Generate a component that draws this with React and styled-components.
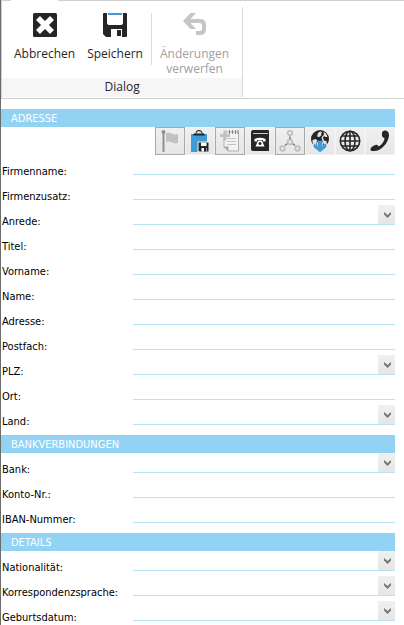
import styled, { createGlobalStyle, css } from 'styled-components';

const GlobalStyle = createGlobalStyle`
  * {
    box-sizing: border-box;
  }

  body {
    margin: 0;
    background: #fff;
    color: #000;
    font-family: "DejaVu Sans Condensed", Tahoma, sans-serif;
    font-size: 11px;
  }

  button, input, select {
    font: inherit;
    color: inherit;
    margin: 0;
  }
`;

const sections = [
  {
    title: 'ADRESSE',
    tools: true,
    fields: [
      { id: 'firmenname', label: 'Firmenname:' },
      { id: 'firmenzusatz', label: 'Firmenzusatz:' },
      { id: 'anrede', label: 'Anrede:', select: true },
      { id: 'titel', label: 'Titel:' },
      { id: 'vorname', label: 'Vorname:' },
      { id: 'name', label: 'Name:' },
      { id: 'adresse', label: 'Adresse:' },
      { id: 'postfach', label: 'Postfach:' },
      { id: 'plz', label: 'PLZ:', select: true },
      { id: 'ort', label: 'Ort:' },
      { id: 'land', label: 'Land:', select: true },
    ],
  },
  {
    title: 'BANKVERBINDUNGEN',
    fields: [
      { id: 'bank', label: 'Bank:', select: true },
      { id: 'konto', label: 'Konto-Nr.:' },
      { id: 'iban', label: 'IBAN-Nummer:' },
    ],
  },
  {
    title: 'DETAILS',
    fields: [
      { id: 'nationalitaet', label: 'Nationalität:', select: true },
      { id: 'sprache', label: 'Korrespondenzsprache:', select: true },
      { id: 'geburtsdatum', label: 'Geburtsdatum:', select: true },
    ],
  },
];

const CancelIcon = () => (
  <svg width="24" height="24" viewBox="0 0 24 24">
    <rect width="24" height="24" rx="1.500" fill="#262626" />
    <path d="M5 5l14 14M19 5L5 19" stroke="#fff" strokeWidth="5.600" />
  </svg>
);

const SaveIcon = () => (
  <svg width="24" height="24" viewBox="0 0 24 24">
    <path d="M1 0h3v10q0 2 2 2h12q2 0 2-2V0h3q1 0 1 1v22q0 1-1 1h-4v-8H8v8H3l-3-3V1q0-1 1-1z" fill="#262626" />
    <path d="M5 0h14v2H5z" fill="#3c9bd8" />
    <path d="M14 17h4v6h-4z" fill="#262626" />
  </svg>
);

const UndoIcon = () => (
  <svg width="24" height="24" viewBox="0 0 24 24">
    <path d="M0 8l7.500-8H13L7.500 6H17q6 0 6 5.500V16q0 6-6 6h-4v-4h3.500q2.500 0 2.500-2.500V12q0-2-2.500-2h-9l5.500 6H7.500z" fill="#c6c6c6" />
  </svg>
);

const FlagIcon = () => (
  <svg width="20" height="24" viewBox="0 0 20 24">
    <circle cx="3.500" cy="3" r="2" fill="#909090" />
    <path d="M2.500 4h2v19h-2z" fill="#909090" />
    <path d="M6 4q3-1 6 .5t6 .5v9q-3 1-6-.5T6 13z" fill="#c2c2c2" />
  </svg>
);

const PasteSaveIcon = () => (
  <svg width="20" height="24" viewBox="0 0 20 24">
    <path d="M1 5h16v8H8v10H1z" fill="#3c9bd8" />
    <path d="M3 6.500q0-2 2.500-2.500Q6 1 9 1t3.500 3Q15 4.500 15 6.500z" fill="#262626" />
    <path d="M6 4.500Q6.500 2 9 2t3 2.500z" fill="#ddd" />
    <path d="M7.500 12.500h12v11h-12z" fill="#eee" />
    <path d="M8.500 13.500h10v9h-9l-1-1z" fill="#262626" />
    <path d="M11 13.500h5.500v3.500H11zM11.500 19h5v3.500h-5z" fill="#fff" />
    <path d="M14 19h2v3.500h-2z" fill="#262626" />
  </svg>
);

const NoteIcon = () => (
  <svg width="20" height="24" viewBox="0 0 20 24">
    <path d="M4 3h14.500v19H8l-4-4z" fill="#f3f3f3" stroke="#b0b0b0" />
    <path d="M4 17.500h4.500V22z" fill="#aaa" />
    <path d="M9.500 1v4M12.500 1v4M15.500 1v4M18 1v4" stroke="#888" />
    <path d="M7 9.500h9M7 12.500h9M7 15.500h9" stroke="#c2c2c2" />
    <path d="M0 6.500h10M5 1.500v10" stroke="#c2c2c2" strokeWidth="3" />
  </svg>
);

const PhoneBookIcon = () => (
  <svg width="20" height="22" viewBox="0 0 20 22">
    <path d="M3 0h15q1 0 1 1v20H3q-2 0-2-2V3q0-3 2-3z" fill="#262626" />
    <path d="M3 3.500h15" stroke="#ccc" />
    <path d="M4.500 11.500V9q5.500-2.500 11 0v2.500H13V10H7v1.500zM8 10.500h4l2.500 6h-9z" fill="#fff" />
    <circle cx="10" cy="13.500" r="1.500" fill="#262626" />
  </svg>
);

const NetworkIcon = () => (
  <svg width="22" height="22" viewBox="0 0 22 22">
    <path d="M11 6.500v2.500M8.500 13.500L6 15.500M13.500 13.500l2.500 2" stroke="#777" strokeWidth="1.500" />
    <g fill="none" stroke="#bdbdbd" strokeWidth="1.700">
      <circle cx="11" cy="3" r="2.300" />
      <circle cx="11" cy="12" r="2.300" />
      <circle cx="3.500" cy="18.500" r="2.300" />
      <circle cx="18.500" cy="18.500" r="2.300" />
    </g>
  </svg>
);

const GlobeDownIcon = () => (
  <svg width="20" height="24" viewBox="0 0 20 24">
    <circle cx="10" cy="10" r="9" fill="#262626" />
    <path d="M2.500 11l3-1 2 1.500-1 2v3l-2-1-2-2zM8 4l2-1.500 2 .5-1 2 .5 1-2 2L7 7.500zM13.500 3L16 4.500 17.500 8l-2 0-1.500-1-1 2 1 2.500 3 1-1 2.500-2 1-1.500-4-1-3 1-2 1.500-1z" fill="#e4e4e4" />
    <path d="M7 13h6v4l4-3v4l-7 5.500L3 18v-4l4 3z" fill="#eee" />
    <path d="M8 12h4v6l4-3v3l-6 5-6-5v-3l4 3z" fill="#3c9bd8" stroke="#3c9bd8" strokeWidth=".8" />
  </svg>
);

const GlobeIcon = () => (
  <svg width="22" height="22" viewBox="0 0 22 22">
    <g fill="none" stroke="#262626" strokeWidth="1.600">
      <circle cx="11" cy="11" r="9.700" />
      <ellipse cx="11" cy="11" rx="5" ry="9.700" />
      <path d="M11 1v20M1 11h20M3 6h16M3 16h16" />
    </g>
  </svg>
);

const PhoneIcon = () => (
  <svg width="20" height="22" viewBox="0 0 20 22">
    <path d="M12 2.500q1-2.500 4-2 3 1 3 5-.5 6-5.500 11T3 21q-3 0-2.500-2 .5-2.500 3.500-3.500 2.500-1 3.500-.5l1 1.500q3-1.500 4.500-4t1.500-4.500q-2.500-.5-2.500-2.500z" fill="#262626" />
  </svg>
);

const Chevron = () => (
  <svg width="7" height="6" viewBox="0 0 7 6">
    <path d="M0 0l3.500 3L7 0v2.500L3.500 6 0 2.500z" fill="#777" />
  </svg>
);

const tools = [
  { name: 'Markieren', Icon: FlagIcon, framed: true },
  { name: 'Einfügen und speichern', Icon: PasteSaveIcon },
  { name: 'Neue Notiz', Icon: NoteIcon, framed: true },
  { name: 'Telefonbuch', Icon: PhoneBookIcon },
  { name: 'Beziehungen', Icon: NetworkIcon, framed: true },
  { name: 'Aus dem Web laden', Icon: GlobeDownIcon },
  { name: 'Webseite', Icon: GlobeIcon },
  { name: 'Anrufen', Icon: PhoneIcon },
];

const Window = styled.main`
  border-left: 1px solid #6b6b6b;
`;

const RibbonTop = styled.div`
  display: grid;
  grid-template-columns: 10px 47px 1fr;
  height: 1px;
`;

const TopLine = styled.span`
  background: ${(props) => (props.$open ? '#fff' : '#d0d0d0')};
`;

const Ribbon = styled.header`
  display: flex;
  padding: 6px 0 1px;
  border-left: 1px solid #d0d0d0;
  border-bottom: 1px solid #d0d0d0;
  font-family: "Open Sans", "Segoe UI", sans-serif;
  font-size: 12px;
  color: #262626;
`;

const RibbonGroup = styled.section`
  border-right: 1px solid #dcdcdc;
`;

const RibbonButtons = styled.div`
  display: flex;
  align-items: flex-start;
  gap: 4px;
  height: 71px;
  padding: 6px 9px 0 8px;
`;

const RibbonButton = styled.button`
  display: flex;
  flex-direction: column;
  align-items: center;
  padding: 0 4px;
  border: none;
  background: none;
  line-height: 15px;

  svg {
    margin-bottom: 9px;
  }

  &:disabled {
    color: #a0a0a0;
  }
`;

const Divider = styled.span`
  width: 1px;
  height: 52px;
  background: #dcdcdc;
`;

const GroupTitle = styled.div`
  height: 19px;
  line-height: 18px;
  background: #f6f6f6;
  text-align: center;
`;

const Form = styled.form`
  padding: 10px 9px 0 0;
`;

const Section = styled.section`
  padding-bottom: 5px;
`;

const SectionTitle = styled.h2`
  height: 18px;
  margin: 0;
  padding-left: 10px;
  background: #92d3f4;
  color: #fff;
  font-size: 11px;
  font-weight: 400;
  line-height: 19px;
`;

const Toolbar = styled.div`
  display: flex;
  justify-content: flex-end;
`;

const ToolButton = styled.button`
  display: flex;
  align-items: center;
  justify-content: center;
  width: 30px;
  height: 28px;
  padding: 0;
  border: 1px solid ${(props) => (props.$framed ? '#a8a8a8' : '#f2f2f2')};
  background: linear-gradient(#f0f0f0, #e6e6e6);
`;

const Row = styled.div`
  display: grid;
  grid-template-columns: 132px 1fr;
  align-items: start;
  height: 25px;
`;

const Label = styled.label`
  padding: 10px 0 0 1px;
  line-height: 14px;
  white-space: nowrap;
`;

const control = css`
  display: block;
  width: 100%;
  height: 20px;
  padding: 0 4px;
  border: none;
  border-bottom: 1px solid #b9e4f5;
  border-radius: 0;
  background: transparent;
  outline: none;
`;

const Input = styled.input`
  ${control}
`;

const SelectWrap = styled.div`
  position: relative;
`;

const Select = styled.select`
  ${control}
  appearance: none;
`;

const Arrow = styled.span`
  position: absolute;
  top: 0;
  right: 0;
  display: flex;
  align-items: center;
  justify-content: center;
  width: 17px;
  height: 19px;
  padding: 1px 0 0 1px;
  background: linear-gradient(#f0f0f0, #e6e6e6);
  pointer-events: none;
`;

const Field = ({ id, label, select }) => (
  <Row>
    <Label htmlFor={id}>{label}</Label>
    {select ? (
      <SelectWrap>
        <Select id={id} defaultValue="">
          <option value="" />
        </Select>
        <Arrow>
          <Chevron />
        </Arrow>
      </SelectWrap>
    ) : (
      <Input id={id} type="text" />
    )}
  </Row>
);

const App = () => {
  return (
    <>
      <GlobalStyle />
      <Window>
        <RibbonTop>
          <TopLine />
          <TopLine $open />
          <TopLine />
        </RibbonTop>
        <Ribbon>
          <RibbonGroup>
            <RibbonButtons>
              <RibbonButton type="button">
                <CancelIcon />
                Abbrechen
              </RibbonButton>
              <RibbonButton type="button">
                <SaveIcon />
                Speichern
              </RibbonButton>
              <Divider />
              <RibbonButton type="button" disabled>
                <UndoIcon />
                <span>
                  Änderungen
                  <br />
                  verwerfen
                </span>
              </RibbonButton>
            </RibbonButtons>
            <GroupTitle>Dialog</GroupTitle>
          </RibbonGroup>
        </Ribbon>
        <Form>
          {sections.map((section) => (
            <Section key={section.title}>
              <SectionTitle>{section.title}</SectionTitle>
              {section.tools && (
                <Toolbar>
                  {tools.map(({ name, Icon, framed }) => (
                    <ToolButton key={name} type="button" aria-label={name} $framed={framed}>
                      <Icon />
                    </ToolButton>
                  ))}
                </Toolbar>
              )}
              {section.fields.map((field) => (
                <Field key={field.id} {...field} />
              ))}
            </Section>
          ))}
        </Form>
      </Window>
    </>
  );
};

export default App;
